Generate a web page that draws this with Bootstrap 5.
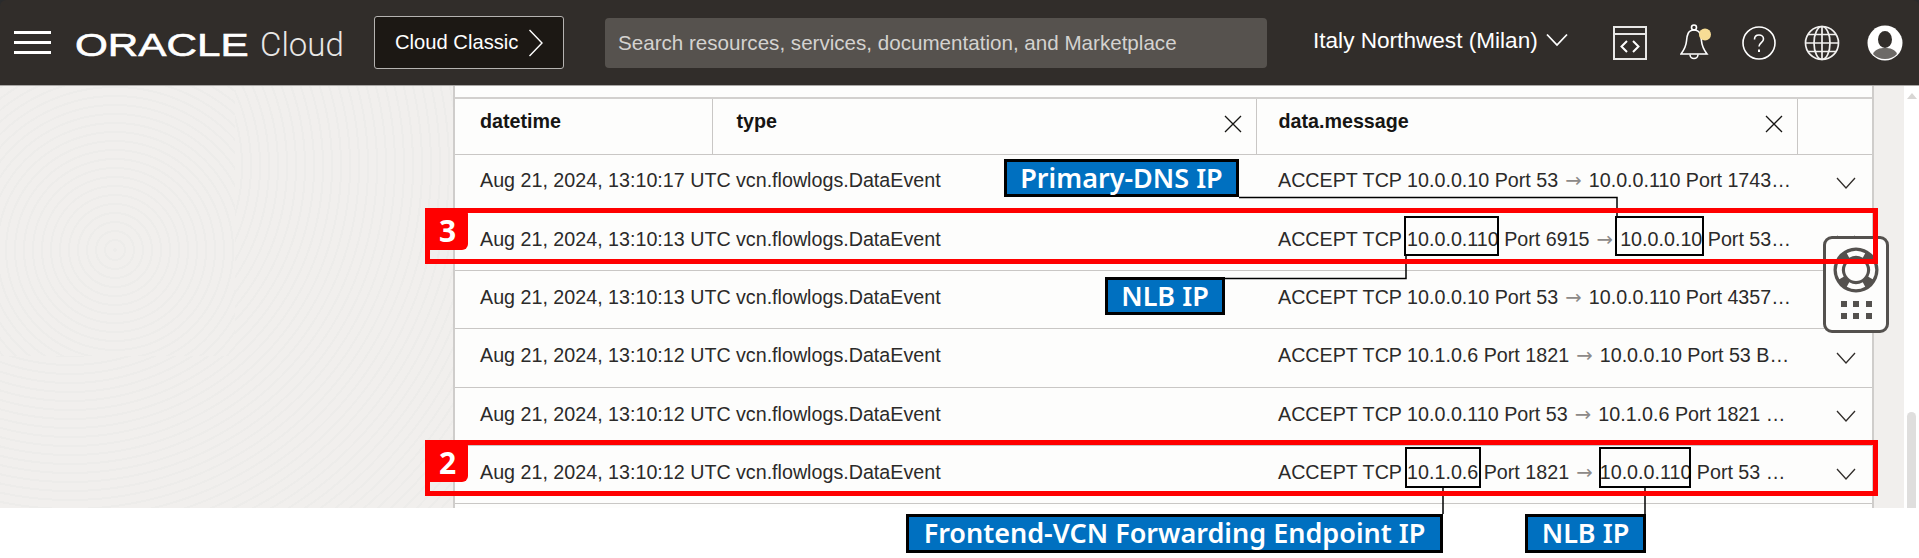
<!DOCTYPE html>
<html lang="en">
<head>
<meta charset="utf-8">
<title>Oracle Cloud logging</title>
<link rel="stylesheet" href="https://cdn.jsdelivr.net/npm/bootstrap@5.3.0/dist/css/bootstrap.min.css">
<style>
html,body{height:100%;overflow:hidden;background:#fff;font-family:"Liberation Sans",Arial,sans-serif}
.page-shell{position:relative;width:1919px;height:558px;overflow:hidden;background:#fff}
.top-cap{background:#2a2b2c}
.oci-bar{height:86px;background:#312d2a;border-bottom:1px solid #a9a7a5;border-radius:6px 6px 0 0;padding:0;flex-wrap:nowrap;justify-content:flex-start;color:#fff}
.burger{width:37px;height:23px;margin-left:14px;margin-top:-1px;display:flex;flex-direction:column;justify-content:space-between}
.burger span{display:block;height:3px;background:#fff}
.brand-logo{margin-left:24px;width:270px;display:flex;align-items:baseline;white-space:nowrap;margin-top:10px}
.logo-word{display:block;width:185px;flex:none;line-height:32px}
.logo-word span{display:inline-block;font-size:32px;line-height:32px;color:#fff;-webkit-text-stroke:.6px #fff;transform:scaleX(1.32);transform-origin:left center}
.logo-cloud{font-family:Roboto,sans-serif;font-weight:300;font-size:33px;line-height:32px;color:#e8e7e6}
.classic-btn{margin-left:29px;width:190px;height:53px;background:#1c1814;border:1px solid #b5b3b1;border-radius:3px;color:#fff;font-size:20.2px;display:flex;align-items:center;padding:0 0 0 20px;gap:10px;white-space:nowrap}
.search-box{margin-left:41px;width:662px;height:50px;background:#56524e;border-radius:4px;color:#d4d2d0;font-size:20.6px;line-height:50px;padding-left:13px;white-space:nowrap}
.region{margin-left:46px;font-size:22.6px;display:flex;align-items:center;gap:8px;white-space:nowrap;margin-top:-4px}
.bar-icons{margin-left:45px;display:flex;align-items:center}
.stage{height:422px;position:relative;overflow:hidden;background-color:#f1efed;background-image:
 repeating-radial-gradient(circle at 115px 164px,#edecea 0 2px,#f1efed 2px 9px),
 repeating-radial-gradient(circle at 70px 80px,#edecea 0 2px,#f1efed 2px 9px),
 repeating-radial-gradient(circle at 310px 157px,#edecea 0 2px,#f1efed 2px 9px),
 repeating-radial-gradient(circle at 200px 560px,#edecea 0 2px,#f1efed 2px 9px),
 repeating-radial-gradient(circle at 420px 500px,#edecea 0 2px,#f1efed 2px 9px);
 background-size:235px 270px,453px 422px,220px 260px,250px 422px,453px 422px;
 background-position:0 0,0 0,235px 0,0 270px,0 0;background-repeat:no-repeat}
.log-panel{width:1421px;margin-left:453px;background:#fdfdfc;border-left:2px solid #cfcdcb;border-right:2px solid #cfcdcb;padding-top:11px;overflow:hidden;height:100%}
.log-table{table-layout:fixed;width:100%;margin:0;--bs-table-bg:transparent;font-size:19.7px;color:#2b2a29;border-top:2px solid #d2d0ce}
.log-table th,.log-table td{padding:0;vertical-align:middle;white-space:nowrap;border-bottom:1.5px solid #c9c7c5}
.log-table thead th{height:56px;font-weight:700;color:#161513;position:relative;padding-bottom:8px}
.log-table tbody td{height:58.33px;padding-bottom:4px}
.c-a{width:257px;padding-left:25px!important}
.c-b{width:544px;padding-left:24px!important}
.c-c{width:541px;padding-left:22px!important}
.c-d{text-align:center}
.head-cell{display:flex;align-items:center;justify-content:space-between;height:100%}
.div-r{border-right:1.5px solid #c9c7c5}
.arrow{font-family:"DejaVu Sans",sans-serif;color:#8d8a88;margin:0 1.6px}
.x-mark{display:block;margin-right:14px;margin-top:4px}
.chev{display:block;margin:3px auto 0 auto;position:relative;left:11px}
.scroll-rail{position:absolute;top:0;right:0;bottom:0;width:15px;background:#fff;display:flex;flex-direction:column;justify-content:space-between;align-items:center;padding-top:7px}
.rail-up{width:0;height:0;border-left:5px solid transparent;border-right:5px solid transparent;border-bottom:6px solid #d8d6d4}
.rail-thumb{width:9px;height:96px;background:#dfdedd;border-radius:5px 5px 0 0}
.foot-band{height:50px;background:#fff}
.help-widget{position:absolute;left:1823px;top:236px;width:66px;height:97px;background:#fdfdfc;border:3px solid #54514e;border-radius:9px;display:flex;flex-direction:column;align-items:center;padding-top:8px}
.dot-grid{display:grid;grid-template-columns:repeat(3,6px);gap:6px 6.5px;margin-top:8px}
.dot-grid span{width:6px;height:6px;background:#54514e}
.leader{position:absolute;left:0;top:0;pointer-events:none}
.red-frame{position:absolute;border:5px solid #f00;left:425px;width:1453px;height:56px}
.rf-3{top:208px}
.rf-2{top:440px}
.step-tag{position:absolute;left:425px;width:43px;height:42px;background:#f00;color:#fff;border-radius:0 6px 6px 0;font:700 30px/46px "Open Sans","Noto Sans",sans-serif;text-align:center;padding-left:2px;overflow:hidden}
.st-3{top:208px}
.st-2{top:440px}
.ip-box{position:absolute;border:2.5px solid #000}
.b1{left:1404px;top:216px;width:95px;height:40px}
.b2{left:1615px;top:216px;width:89px;height:40px}
.b3{left:1405px;top:447px;width:76px;height:41px}
.b4{left:1599px;top:447px;width:92px;height:41px}
.tagline{position:absolute;background:#0070c0;border:3px solid #000;color:#fff;font:600 27px/31px "Noto Sans",sans-serif;text-align:center;white-space:nowrap}
.t1{left:1004px;top:159px;width:235px;height:38px}
.t2{left:1105px;top:277px;width:120px;height:38px}
.t3{left:906px;top:514px;width:537px;height:39px}
.t4{left:1525px;top:514px;width:121px;height:39px}
</style>
</head>
<body>
<div class="page-shell">
  <div class="top-cap">
  <nav class="navbar oci-bar">
    <div class="burger"><span></span><span></span><span></span></div>
    <div class="brand-logo"><span class="logo-word"><span>ORACLE</span></span><span class="logo-cloud">Cloud</span></div>
    <button type="button" class="classic-btn">Cloud Classic
      <svg width="15" height="28" viewBox="0 0 15 28"><path d="M1.500 1 14 14 1.500 27" fill="none" stroke="#fff" stroke-width="1.400"/></svg>
    </button>
    <div class="search-box">Search resources, services, documentation, and Marketplace</div>
    <div class="region">Italy Northwest (Milan)
      <svg width="22" height="14" viewBox="0 0 22 14"><path d="M1 1.500 11 12 21 1.500" fill="none" stroke="#fff" stroke-width="1.800"/></svg>
    </div>
    <div class="bar-icons">
      <svg width="34" height="34" viewBox="0 0 34 34" fill="none" stroke="#e8e7e6" stroke-width="2"><rect x="1" y="1" width="32" height="32"/><path d="M1 8h32"/><path d="M14 15 8.500 20.500 14 26M20 15l5.500 5.500L20 26" stroke="#fff"/></svg>
      <svg style="margin-left:33px" width="32" height="37" viewBox="0 0 32 37" fill="none" stroke="#fff" stroke-width="1.600"><circle cx="14" cy="3.500" r="2.500"/><path d="M14 6C8 6 7 11 6.500 17 6 23 4 26 1 30H27C24 26 22 23 21.500 17 21 11 20 6 14 6Z"/><path d="M10 30.500a4 4 0 0 0 8 0"/><circle cx="25" cy="10.500" r="6" fill="#f6dc95" stroke="none"/></svg>
      <svg style="margin-left:30px" width="34" height="34" viewBox="0 0 34 34" fill="none" stroke="#fff" stroke-width="1.600"><circle cx="17" cy="17" r="16"/><path d="M12.500 13.500C12.500 10.500 14.500 9 17 9s4.500 1.600 4.500 4c0 3.600-4.500 3.600-4.500 7.500"/><path d="M17 23.500v2.500" stroke-width="2"/></svg>
      <svg style="margin-left:28px" width="36" height="36" viewBox="0 0 36 36" fill="none" stroke="#f2f1f0" stroke-width="1.700"><circle cx="18" cy="18" r="16.500"/><ellipse cx="18" cy="18" rx="8" ry="16.500"/><path d="M18 1.500v33M1.500 18h33M4 9.500h28M4 26.500h28"/></svg>
      <svg style="margin-left:27px" width="36" height="36" viewBox="0 0 36 36"><circle cx="18" cy="18" r="17.500" fill="#fff"/><ellipse cx="18" cy="14.500" rx="7" ry="8.500" fill="#312d2a"/><path d="M6 29c2-5 7-6 12-6s10 1 12 6c-3 3.500-7.500 5-12 5s-9-1.500-12-5Z" fill="#6d6a67"/></svg>
    </div>
  </nav>
  </div>

  <main class="stage">
    <div class="log-panel">
      <table class="table log-table">
        <thead>
          <tr>
            <th class="c-a div-r">datetime</th>
            <th class="c-b div-r"><div class="head-cell">type<svg class="x-mark" width="18" height="18" viewBox="0 0 18 18"><path d="M1 1 17 17M17 1 1 17" stroke="#161513" stroke-width="1.300"/></svg></div></th>
            <th class="c-c div-r"><div class="head-cell">data.message<svg class="x-mark" width="18" height="18" viewBox="0 0 18 18"><path d="M1 1 17 17M17 1 1 17" stroke="#161513" stroke-width="1.300"/></svg></div></th>
            <th class="c-d"></th>
          </tr>
        </thead>
        <tbody>
          <tr><td class="c-a">Aug 21, 2024, 13:10:17 UTC</td><td class="c-b">vcn.flowlogs.DataEvent</td><td class="c-c">ACCEPT TCP 10.0.0.10 Port 53 <span class="arrow">→</span> 10.0.0.110 Port 1743…</td><td class="c-d"><svg class="chev" width="20" height="12" viewBox="0 0 20 12"><path d="M1 1 10 11 19 1" fill="none" stroke="#312d2a" stroke-width="1.300"/></svg></td></tr>
          <tr><td class="c-a">Aug 21, 2024, 13:10:13 UTC</td><td class="c-b">vcn.flowlogs.DataEvent</td><td class="c-c">ACCEPT TCP 10.0.0.110 Port 6915 <span class="arrow">→</span> 10.0.0.10 Port 53…</td><td class="c-d"><svg class="chev" width="20" height="12" viewBox="0 0 20 12"><path d="M1 1 10 11 19 1" fill="none" stroke="#312d2a" stroke-width="1.300"/></svg></td></tr>
          <tr><td class="c-a">Aug 21, 2024, 13:10:13 UTC</td><td class="c-b">vcn.flowlogs.DataEvent</td><td class="c-c">ACCEPT TCP 10.0.0.10 Port 53 <span class="arrow">→</span> 10.0.0.110 Port 4357…</td><td class="c-d"><svg class="chev" width="20" height="12" viewBox="0 0 20 12"><path d="M1 1 10 11 19 1" fill="none" stroke="#312d2a" stroke-width="1.300"/></svg></td></tr>
          <tr><td class="c-a">Aug 21, 2024, 13:10:12 UTC</td><td class="c-b">vcn.flowlogs.DataEvent</td><td class="c-c">ACCEPT TCP 10.1.0.6 Port 1821 <span class="arrow">→</span> 10.0.0.10 Port 53 B…</td><td class="c-d"><svg class="chev" width="20" height="12" viewBox="0 0 20 12"><path d="M1 1 10 11 19 1" fill="none" stroke="#312d2a" stroke-width="1.300"/></svg></td></tr>
          <tr><td class="c-a">Aug 21, 2024, 13:10:12 UTC</td><td class="c-b">vcn.flowlogs.DataEvent</td><td class="c-c">ACCEPT TCP 10.0.0.110 Port 53 <span class="arrow">→</span> 10.1.0.6 Port 1821 …</td><td class="c-d"><svg class="chev" width="20" height="12" viewBox="0 0 20 12"><path d="M1 1 10 11 19 1" fill="none" stroke="#312d2a" stroke-width="1.300"/></svg></td></tr>
          <tr><td class="c-a">Aug 21, 2024, 13:10:12 UTC</td><td class="c-b">vcn.flowlogs.DataEvent</td><td class="c-c">ACCEPT TCP 10.1.0.6 Port 1821 <span class="arrow">→</span> 10.0.0.110 Port 53 …</td><td class="c-d"><svg class="chev" width="20" height="12" viewBox="0 0 20 12"><path d="M1 1 10 11 19 1" fill="none" stroke="#312d2a" stroke-width="1.300"/></svg></td></tr>
        </tbody>
      </table>
    </div>
    <div class="scroll-rail"><span class="rail-up"></span><span class="rail-thumb"></span></div>
  </main>
  <div class="foot-band"></div>

  <div class="help-widget">
    <svg width="46" height="46" viewBox="0 0 46 46"><circle cx="23" cy="23" r="22.500" fill="#54514e"/><circle cx="23" cy="23" r="11" fill="#fdfdfc"/><g fill="none" stroke="#fdfdfc" stroke-width="5"><path d="M15 8.500a16.500 16.500 0 0 1 16 0"/><path d="M37.500 15a16.500 16.500 0 0 1 0 16"/><path d="M31 37.500a16.500 16.500 0 0 1-16 0"/><path d="M8.500 31a16.500 16.500 0 0 1 0-16"/></g></svg>
    <div class="dot-grid"><span></span><span></span><span></span><span></span><span></span><span></span></div>
  </div>

  <svg class="leader" width="1919" height="558" fill="none" stroke="#000" stroke-width="1.500">
    <path d="M1239 197.500H1617V216M1225 278.500H1406V255M1443 488V514M1645 488V514"/>
  </svg>
  <div class="red-frame rf-3"></div>
  <div class="red-frame rf-2"></div>
  <div class="step-tag st-3">3</div>
  <div class="step-tag st-2">2</div>
  <div class="ip-box b1"></div><div class="ip-box b2"></div><div class="ip-box b3"></div><div class="ip-box b4"></div>
  <div class="tagline t1">Primary-DNS IP</div>
  <div class="tagline t2">NLB IP</div>
  <div class="tagline t3">Frontend-VCN Forwarding Endpoint IP</div>
  <div class="tagline t4">NLB IP</div>
</div>
<script src="https://cdn.jsdelivr.net/npm/bootstrap@5.3.0/dist/js/bootstrap.bundle.min.js"></script>
</body>
</html>
